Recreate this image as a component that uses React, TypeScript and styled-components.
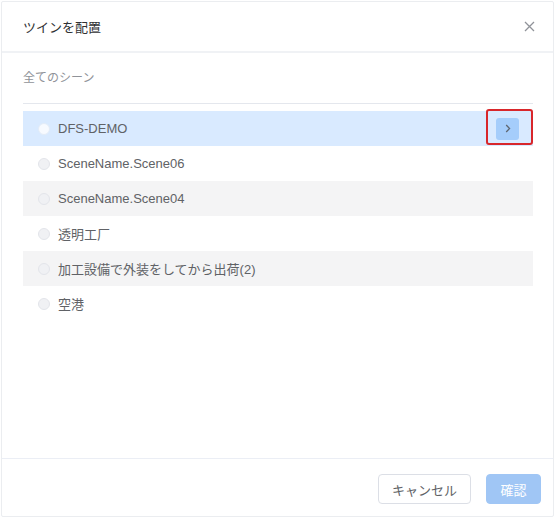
import React from "react";
import styled, { createGlobalStyle } from "styled-components";

const Global = createGlobalStyle`
  html, body { margin: 0; padding: 0; background: #ffffff; }
  body { font-family: "Liberation Sans", Arial, "Noto Sans CJK JP", sans-serif; }
  * { box-sizing: border-box; }
`;

const Page = styled.div`
  width: 556px;
  height: 520px;
  padding: 1px 2px 3px 1px;
`;

const Dialog = styled.div`
  width: 553px;
  height: 516px;
  border: 1px solid #ebedf0;
  border-radius: 2px;
  background: #fff;
  display: flex;
  flex-direction: column;
`;

const Header = styled.div`
  height: 51px;
  flex-shrink: 0;
  display: flex;
  align-items: center;
  justify-content: space-between;
  padding: 0 16px 0 21px;
  border-bottom: 2px solid #f0f2f5;
`;

const Title = styled.span`
  font-size: 13px;
  color: #303133;
`;

const CloseBtn = styled.button`
  border: 0;
  background: transparent;
  padding: 0;
  width: 16px;
  height: 16px;
  display: flex;
  align-items: center;
  justify-content: center;
  color: #909399;
  cursor: pointer;
`;

const Body = styled.div`
  flex: 1;
  padding: 16px 20px 0 21px;
`;

const Label = styled.div`
  font-size: 12px;
  line-height: 18px;
  color: #909399;
  padding-bottom: 16px;
  border-bottom: 1px solid #e4e7ed;
  margin-bottom: 7px;
`;

const List = styled.div`
  display: flex;
  flex-direction: column;
`;

const Row = styled.div<{ $bg: string }>`
  position: relative;
  height: 35px;
  display: flex;
  align-items: center;
  padding: 0 14px 0 15px;
  background: ${(p) => p.$bg};
`;

const Radio = styled.span<{ $active: boolean }>`
  width: 12px;
  height: 12px;
  border-radius: 50%;
  border: 1px solid ${(p) => (p.$active ? "#e3ecf8" : "#e3e5ea")};
  background: ${(p) => (p.$active ? "#f7faff" : "#f0f1f4")};
  flex-shrink: 0;
  margin-right: 8px;
`;

const Name = styled.span`
  flex: 1;
  font-size: 13px;
  color: #606266;
  white-space: nowrap;
`;

const ArrowBtn = styled.button`
  width: 23px;
  height: 22px;
  border: 0;
  border-radius: 3px;
  background: #a5cdfb;
  padding: 0;
  display: flex;
  align-items: center;
  justify-content: center;
  color: #5f6670;
`;

const Highlight = styled.span`
  position: absolute;
  left: 463px;
  top: -2px;
  width: 47px;
  height: 36px;
  border: 2px solid #d8262b;
  border-radius: 3px;
  pointer-events: none;
`;

const Footer = styled.div`
  height: 58px;
  flex-shrink: 0;
  border-top: 1px solid #ebeef5;
  display: flex;
  justify-content: flex-end;
  align-items: flex-start;
  gap: 15px;
  padding: 15px 12px 0 0;
`;

const Button = styled.button<{ $primary?: boolean }>`
  height: 30px;
  padding: 0;
  width: ${(p) => (p.$primary ? "55px" : "93px")};
  border-radius: 4px;
  font-family: "Liberation Sans", Arial, "Noto Sans CJK JP", sans-serif;
  font-size: 13px;
  border: 1px solid ${(p) => (p.$primary ? "#a0c6f5" : "#dcdfe6")};
  background: ${(p) => (p.$primary ? "#a0c6f5" : "#fff")};
  color: ${(p) => (p.$primary ? "#fff" : "#606266")};
`;

const scenes = [
  "DFS-DEMO",
  "SceneName.Scene06",
  "SceneName.Scene04",
  "透明工厂",
  "加工設備で外装をしてから出荷(2)",
  "空港",
];

export default function App() {
  return (
    <Page>
      <Global />
      <Dialog>
        <Header>
          <Title>ツインを配置</Title>
          <CloseBtn aria-label="close">
            <svg width="11" height="11" viewBox="0 0 11 11">
              <path d="M1 1L10 10M10 1L1 10" stroke="currentColor" strokeWidth="1.3" />
            </svg>
          </CloseBtn>
        </Header>
        <Body>
          <Label>全てのシーン</Label>
          <List>
            {scenes.map((s, i) => {
              const active = i === 0;
              const bg = active ? "#d9eaff" : i % 2 === 0 ? "#f4f4f5" : "#fff";
              return (
                <Row key={s} $bg={bg}>
                  <Radio $active={active} />
                  <Name>{s}</Name>
                  {active && (
                    <>
                      <ArrowBtn aria-label="open">
                        <svg width="6" height="9" viewBox="0 0 6 9">
                          <path d="M1.2 1L4.6 4.5L1.2 8" fill="none" stroke="currentColor" strokeWidth="1.3" />
                        </svg>
                      </ArrowBtn>
                      <Highlight />
                    </>
                  )}
                </Row>
              );
            })}
          </List>
        </Body>
        <Footer>
          <Button>キャンセル</Button>
          <Button $primary>確認</Button>
        </Footer>
      </Dialog>
    </Page>
  );
}
